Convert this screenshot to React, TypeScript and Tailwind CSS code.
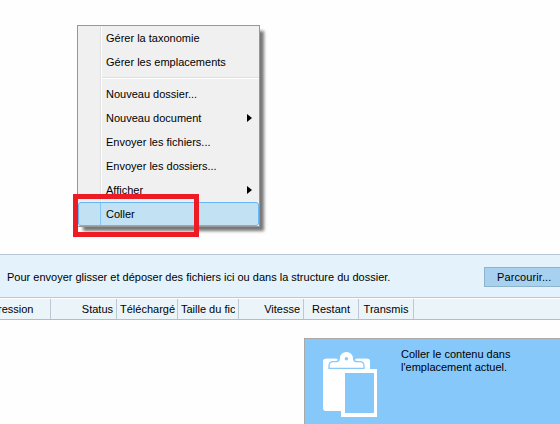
type MenuRow = { label: string; arrow?: boolean };

const topRows: MenuRow[] = [
  { label: "Gérer la taxonomie" },
  { label: "Gérer les emplacements" },
];

const rows: MenuRow[] = [
  { label: "Nouveau dossier..." },
  { label: "Nouveau document", arrow: true },
  { label: "Envoyer les fichiers..." },
  { label: "Envoyer les dossiers..." },
  { label: "Afficher", arrow: true },
];

function Row({ row }: { row: MenuRow }) {
  return (
    <div className="flex h-6 items-center justify-between pr-[7px]">
      <div className="flex h-full w-6 shrink-0 border-r border-white">
        <div className="grow border-r border-[#e0e0e0]" />
      </div>
      <span className="grow pl-1">{row.label}</span>
      {row.arrow && (
        <svg width="5" height="8" viewBox="0 0 5 8">
          <path d="M0 0 L5 4 L0 8 Z" fill="black" />
        </svg>
      )}
    </div>
  );
}

function Clipboard() {
  return (
    <svg width="54" height="66" viewBox="323 351 54 66" fill="white">
      <rect x="323" y="358.700" width="47" height="52.300" rx="3" />
      <path d="M336 357.500H357V361H336Z" fill="#87c8fb" />
      <path
        d="M329 368.300V366Q329 361.700 333 361.700H336.500Q339.200 361.700 339.200 358.300A7.200 7 0 0 1 353.600 358.300Q353.600 361.700 356.300 361.700H360Q364 361.700 364 366V368.300Z"
        stroke="#87c8fb"
        strokeWidth="1.300"
      />
      <path d="M323 361.700Q323 358.700 326 358.700H337.500V360.700H332Q328 361.500 328 366H323Z" />
      <path d="M370 361.700Q370 358.700 367 358.700H355.300V360.700H361Q365 361.500 365 366H370Z" />
      <circle cx="346.400" cy="358.700" r="1.700" fill="#87c8fb" />
      <rect x="341" y="369" width="36" height="48" />
      <rect x="345" y="373" width="29" height="40" fill="#87c8fb" />
    </svg>
  );
}

export default function App() {
  return (
    <div className="relative flex h-[424px] w-[560px] flex-col overflow-hidden bg-[#fefefe] font-['Liberation_Sans',Arial,sans-serif] text-[11px] leading-[13px] whitespace-nowrap text-black">
      <div className="h-[254px] shrink-0 pt-[25px] pl-[77px]">
        <div className="h-[202px] w-[183px] border border-[#979797] bg-[#f0f0f0] shadow-[5px_5px_3px_-1px_#777]">
          {topRows.map((row) => (
            <Row key={row.label} row={row} />
          ))}
          <div className="flex h-2">
            <div className="flex w-6 border-r border-white">
              <div className="grow border-r border-[#e0e0e0]" />
            </div>
            <div className="mt-[3px] h-[2px] grow border-t border-b border-t-[#e0e0e0] border-b-white" />
          </div>
          {rows.map((row) => (
            <Row key={row.label} row={row} />
          ))}
          <div className="flex h-6 items-center rounded-[3px] border border-[#66b5f5] bg-[#c2e1f3]">
            <div className="h-full w-[22px] border-r border-[#85c5f5]" />
            <span className="pl-[5px]">Coller</span>
          </div>
        </div>
      </div>
      <div className="flex h-11 shrink-0 items-center justify-between border-t border-b border-[#b9c6d3] bg-[#e4f3fb] pl-[7px]">
        <span className="pt-[2px]">
          Pour envoyer glisser et déposer des fichiers ici ou dans la structure du dossier.
        </span>
        <div className="mt-[2px] flex h-5 w-[76px] items-center border border-r-0 border-[#8eb3cc] bg-[#a8d1f0] pl-3">
          <span className="tracking-[0.1px]">Parcourir...</span>
        </div>
      </div>
      <div className="flex h-[22px] shrink-0 border-t border-b border-t-white border-b-[#afbfca] bg-[#ebf4f8] *:flex *:items-center *:overflow-hidden *:border-r *:border-[#bcc8d4]">
        <div className="w-[51px]">
          <span className="-ml-[2px]">ression</span>
        </div>
        <div className="w-[66px] justify-end pr-[3px]">
          <span>Status</span>
        </div>
        <div className="w-[61px] pr-[2px] pl-[3px]">
          <span className="overflow-hidden">Téléchargé</span>
        </div>
        <div className="w-[61px] pr-[3px] pl-[3px]">
          <span className="overflow-hidden">Taille du fichier</span>
        </div>
        <div className="w-[65px] justify-end pr-[3px]">
          <span>Vitesse</span>
        </div>
        <div className="w-[55px] justify-center">
          <span>Restant</span>
        </div>
        <div className="w-[55px] justify-center">
          <span>Transmis</span>
        </div>
      </div>
      <div className="mt-[18px] ml-[304px] flex grow border-t border-l border-[#a9a9a9] bg-[#87c8fb] pt-3 pl-[18px]">
        <Clipboard />
        <p className="-mt-[3px] ml-6">
          Coller le contenu dans
          <br />
          l'emplacement actuel.
        </p>
      </div>
      <div className="absolute top-[194px] left-[73px] h-[43px] w-[126px] border-5 border-[#ed1c24]" />
    </div>
  );
}
